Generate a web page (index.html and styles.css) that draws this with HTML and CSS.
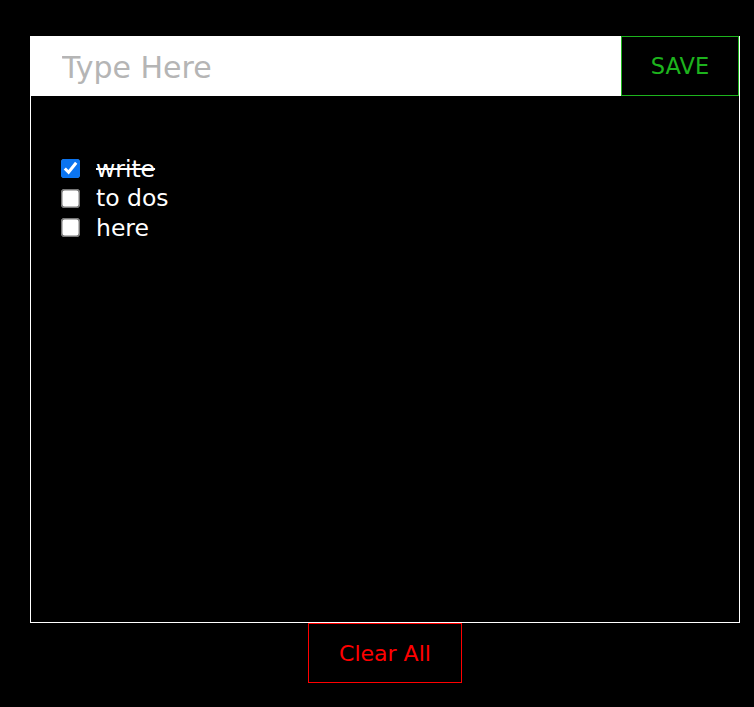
FILE: index.html
```html
<!DOCTYPE html>
<html lang="en">
<head>
<meta charset="utf-8">
<title>To Do</title>
<link rel="stylesheet" href="styles.css">
</head>
<body>
<main class="page">
  <section class="app">
    <div class="bar">
      <input class="field" type="text" placeholder="Type Here">
      <button class="save" type="button">SAVE</button>
    </div>
    <ul class="list">
      <li class="item done"><input class="check" type="checkbox" checked><span class="label">write</span></li>
      <li class="item"><input class="check" type="checkbox"><span class="label">to dos</span></li>
      <li class="item"><input class="check" type="checkbox"><span class="label">here</span></li>
    </ul>
  </section>
  <div class="footer">
    <button class="clear" type="button">Clear All</button>
  </div>
</main>
</body>
</html>
```
FILE: styles.css
```css
html, body {
  margin: 0;
  padding: 0;
  background: #000;
}
body {
  font-family: "DejaVu Sans", "Open Sans", sans-serif;
  color: #fff;
}
.page {
  padding: 36px 0 0 30px;
  width: 710px;
}
.app {
  width: 710px;
  height: 587px;
  box-sizing: border-box;
  border: 1px solid #fff;
  border-top: 0;
  display: flex;
  flex-direction: column;
}
.bar {
  display: flex;
  height: 60px;
  margin-left: -1px;
}
.field {
  flex: 1;
  min-width: 0;
  border: 0;
  outline: none;
  margin: 0;
  padding: 2px 0 0 32px;
  height: 60px;
  box-sizing: border-box;
  background: #fff;
  font-family: inherit;
  font-size: 30px;
  color: #333;
}
.field::placeholder {
  color: #b5b5b5;
}
.save {
  width: 118px;
  height: 60px;
  margin: 0;
  box-sizing: border-box;
  background: #000;
  border: 1px solid #1db31d;
  color: #1db31d;
  font-family: inherit;
  font-size: 22.5px;
  padding: 0;
}
.list {
  list-style: none;
  margin: 0;
  padding: 58px 0 0 30px;
}
.item {
  display: flex;
  align-items: center;
  height: 29.5px;
  font-size: 23.5px;
}
.check {
  width: 13px;
  height: 13px;
  margin: 0 19px 0 3px;
  transform: scale(1.46);
  accent-color: #0b74f0;
}
.done .label {
  text-decoration: line-through;
}
.footer {
  display: flex;
  justify-content: center;
}
.clear {
  width: 154px;
  height: 60px;
  margin: 0;
  box-sizing: border-box;
  background: #000;
  border: 1px solid #f00;
  color: #f00;
  font-family: inherit;
  font-size: 22px;
  padding: 0;
}
```
